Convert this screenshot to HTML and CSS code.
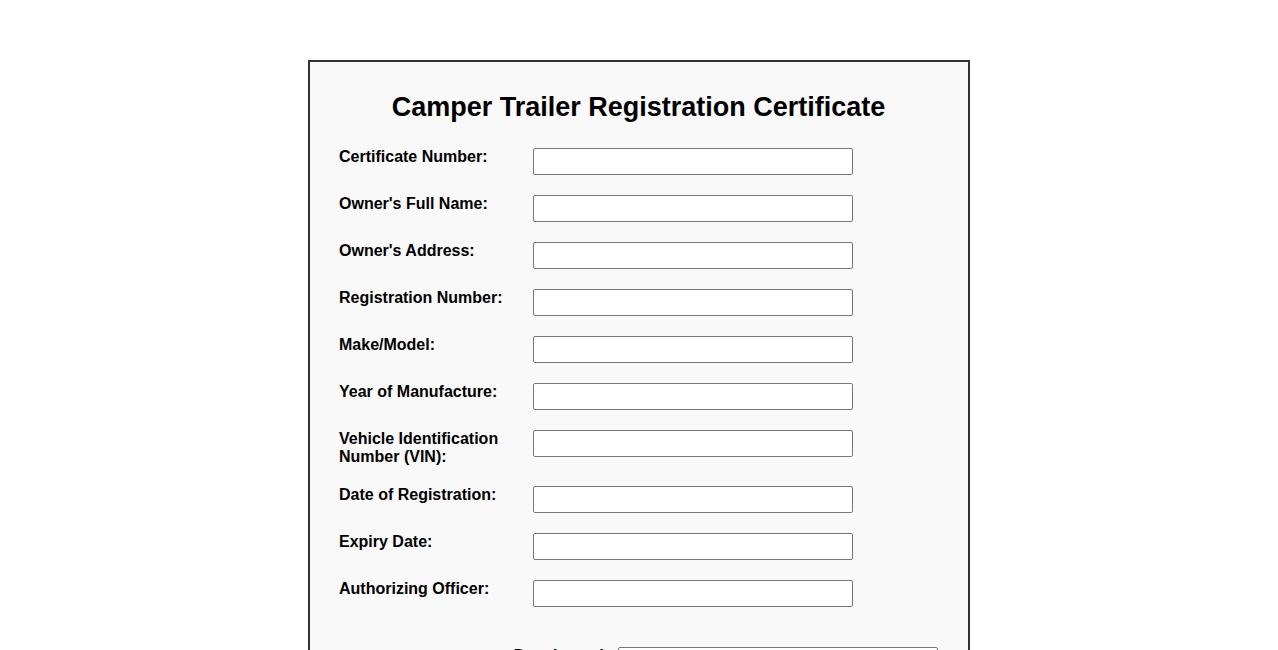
FILE: index.html
```html
<!DOCTYPE html>
<html lang="en">
<head>
    <meta charset="UTF-8">
    <meta name="viewport" content="width=device-width, initial-scale=1.0">
    <title>Camper Trailer Registration Certificate</title>
    <link rel="stylesheet" href="styles.css">
</head>
<body>
    <!-- certificate form -->
    <div class="certificate">
        <h1 class="cert-title">Camper Trailer Registration Certificate</h1>

        <div class="field-row">
            <label class="field-label" for="certNo">Certificate Number:</label>
            <input class="field-input" type="text" id="certNo">
        </div>
        <div class="field-row">
            <label class="field-label" for="ownerName">Owner's Full Name:</label>
            <input class="field-input" type="text" id="ownerName">
        </div>
        <div class="field-row">
            <label class="field-label" for="ownerAddress">Owner's Address:</label>
            <input class="field-input" type="text" id="ownerAddress">
        </div>
        <div class="field-row">
            <label class="field-label" for="regNo">Registration Number:</label>
            <input class="field-input" type="text" id="regNo">
        </div>
        <div class="field-row">
            <label class="field-label" for="makeModel">Make/Model:</label>
            <input class="field-input" type="text" id="makeModel">
        </div>
        <div class="field-row">
            <label class="field-label" for="year">Year of Manufacture:</label>
            <input class="field-input" type="text" id="year">
        </div>
        <div class="field-row">
            <label class="field-label" for="vin">Vehicle Identification Number (VIN):</label>
            <input class="field-input" type="text" id="vin">
        </div>
        <div class="field-row">
            <label class="field-label" for="regDate">Date of Registration:</label>
            <input class="field-input" type="text" id="regDate">
        </div>
        <div class="field-row">
            <label class="field-label" for="expiry">Expiry Date:</label>
            <input class="field-input" type="text" id="expiry">
        </div>
        <div class="field-row">
            <label class="field-label" for="officer">Authorizing Officer:</label>
            <input class="field-input" type="text" id="officer">
        </div>

        <!-- issue date -->
        <div class="issue-row">
            <label class="issue-label" for="issued">Date Issued:</label>
            <input class="field-input" type="text" id="issued">
        </div>
    </div>
</body>
</html>
```

FILE: styles.css
```css
/* page */
body {
    margin: 0;
    padding: 60px 0;
    background-color: #ffffff;
    font-family: Arial, "Liberation Sans", sans-serif;
    color: #000;
}

/* certificate box */
.certificate {
    width: 599px;
    margin: 0 auto;
    padding: 30px 30px 30px 29px;
    background-color: #f9f9f9;
    border: 2px solid #333;
}

.cert-title {
    margin: 0 0 25px;
    font-size: 27px;
    font-weight: bold;
    text-align: center;
}

/* rows */
.field-row {
    display: flex;
    align-items: flex-start;
    margin-bottom: 20px;
}

.field-label {
    width: 184px;
    margin-right: 10px;
    font-size: 16px;
    font-weight: bold;
}

.field-input {
    width: 320px;
    height: 27px;
    box-sizing: border-box;
    margin: 0;
    padding: 5px;
    border: 1px solid #767676;
    border-radius: 2px;
    background-color: #fff;
    font-size: 14px;
}

/* issue date row */
.issue-row {
    display: flex;
    justify-content: flex-end;
    align-items: flex-start;
    margin-top: 40px;
}

.issue-label {
    margin-right: 9px;
    font-size: 16px;
    font-weight: bold;
}
```
